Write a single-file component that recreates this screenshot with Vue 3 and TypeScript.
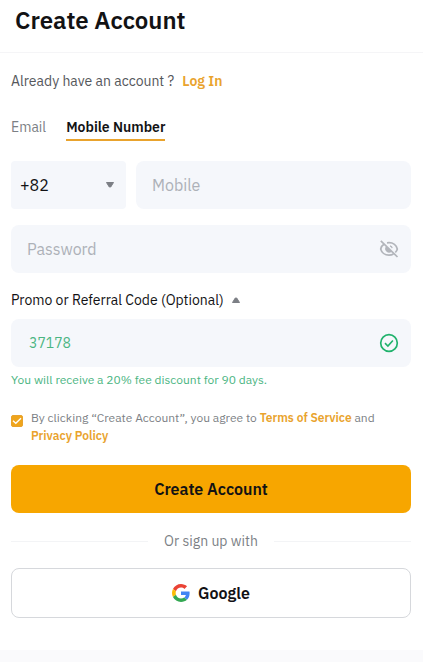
<script setup lang="ts">
import { ref } from 'vue'

type Method = 'email' | 'mobile'

const method = ref<Method>('mobile')
const dialCode = ref('+82')
const account = ref('')
const password = ref('')
const showPassword = ref(false)
const promoOpen = ref(true)
const promoCode = ref('37178')
const agreed = ref(true)
</script>

<template>
  <div class="page">
    <header class="header">
      <h1>Create Account</h1>
    </header>

    <main>
      <form class="form" @submit.prevent>
        <p class="login">
          <span>Already have an account ?</span>
          <a href="#login">Log In</a>
        </p>

        <div class="tabs" role="tablist">
          <button type="button" role="tab" class="tab" :class="{ active: method === 'email' }" :aria-selected="method === 'email'" @click="method = 'email'">Email</button>
          <button type="button" role="tab" class="tab" :class="{ active: method === 'mobile' }" :aria-selected="method === 'mobile'" @click="method = 'mobile'">Mobile Number</button>
        </div>

        <div class="account-row">
          <div class="field code">
            <select v-model="dialCode" aria-label="Country code">
              <option>+82</option>
              <option>+81</option>
              <option>+65</option>
            </select>
            <svg class="caret" viewBox="0 0 10 8" aria-hidden="true"><path d="M1.500 1.500h7l-2.800 4.500h-1.400z" /></svg>
          </div>
          <div class="field">
            <input v-model="account" type="tel" placeholder="Mobile" aria-label="Mobile" />
          </div>
        </div>

        <div class="field password">
          <input v-model="password" :type="showPassword ? 'text' : 'password'" placeholder="Password" aria-label="Password" />
          <button type="button" class="icon-button" aria-label="Show password" @click="showPassword = !showPassword">
            <svg viewBox="0 0 20 20" fill="none" stroke="#b2b5bb" stroke-width="1.7" aria-hidden="true">
              <path d="M5.200 5C3.300 6.200 2 8 1.700 10c.8 3.500 4.100 6.200 8.300 6.200 1.700 0 3.200-.4 4.500-1.200M8 3.900c.7-.1 1.300-.2 2-.2 4.200 0 7.500 2.800 8.300 6.300-.3 1.300-1 2.500-2 3.500" />
              <path d="M7.200 7.200a3.900 3.900 0 0 0 5.500 5.500z" fill="#b2b5bb" stroke="none" />
              <path d="M11 6.900c1.200.3 2 1.200 2.200 2.300" stroke-width="1.200" />
              <path d="M1.800 1.800l16.700 16.200" />
            </svg>
          </button>
        </div>

        <button type="button" class="promo-toggle" :aria-expanded="promoOpen" @click="promoOpen = !promoOpen">
          <span>Promo or Referral Code (Optional)</span>
          <svg class="caret up" viewBox="0 0 10 8" aria-hidden="true"><path d="M1.500 1.500h7l-2.800 4.500h-1.400z" /></svg>
        </button>

        <div v-if="promoOpen" class="promo">
          <div class="field">
            <input v-model="promoCode" type="text" aria-label="Promo or Referral Code" />
            <svg class="check" viewBox="0 0 20 20" fill="none" stroke="#20b26c" aria-hidden="true">
              <circle cx="10" cy="10" r="8.300" stroke-width="1.700" />
              <path d="M6 10.200l2.900 2.800 5-5.500" stroke-width="1.600" />
            </svg>
          </div>
          <p class="hint">You will receive a 20% fee discount for 90 days.</p>
        </div>

        <div class="terms">
          <input id="agree" v-model="agreed" type="checkbox" />
          <svg class="tick" viewBox="0 0 12 12" aria-hidden="true"><path d="M2 5.800l2.800 2.500 5.200-5" /></svg>
          <label for="agree">By clicking “Create Account”, you agree to <a href="#terms">Terms of Service</a> and <a href="#privacy">Privacy Policy</a></label>
        </div>

        <button type="submit" class="submit">Create Account</button>

        <div class="divider"><span>Or sign up with</span></div>

        <button type="button" class="google">
          <svg viewBox="0 0 48 48" aria-hidden="true">
            <path fill="#ea4335" d="M24 9.500c3.540 0 6.710 1.220 9.210 3.600l6.850-6.850C35.900 2.380 30.470 0 24 0 14.620 0 6.510 5.380 2.560 13.220l7.980 6.190C12.430 13.720 17.740 9.500 24 9.500z" />
            <path fill="#4285f4" d="M46.980 24.550c0-1.570-.15-3.090-.38-4.550H24v9.020h12.940c-.58 2.960-2.260 5.480-4.780 7.180l7.730 6c4.510-4.180 7.090-10.360 7.090-17.650z" />
            <path fill="#fbbc05" d="M10.530 28.590c-.48-1.450-.76-2.990-.76-4.590s.27-3.140.76-4.590l-7.980-6.190C.92 16.460 0 20.120 0 24c0 3.880.92 7.540 2.560 10.780l7.970-6.190z" />
            <path fill="#34a853" d="M24 48c6.480 0 11.930-2.130 15.890-5.810l-7.730-6c-2.150 1.450-4.920 2.300-8.160 2.300-6.260 0-11.570-4.220-13.470-9.910l-7.980 6.190C6.510 42.620 14.620 48 24 48z" />
          </svg>
          <span>Google</span>
        </button>
      </form>
    </main>

    <footer class="footer"></footer>
  </div>
</template>

<style>
body {
  margin: 0;
  background: #fff;
}
</style>

<style scoped>
.page {
  display: flex;
  flex-direction: column;
  min-height: 100vh;
  font-family: "IBM Plex Sans", Roboto, "Liberation Sans", sans-serif;
  font-size: 14px;
  line-height: 20px;
  color: #121214;
}

.page *,
.page {
  box-sizing: border-box;
}

.header {
  padding: 4px 15px 16px;
  border-bottom: 1px solid #f5f5f7;
}

h1 {
  margin: 0;
  font-size: 24px;
  line-height: 32px;
  font-weight: 600;
}

p {
  margin: 0;
}

button,
input,
select {
  margin: 0;
  padding: 0;
  border: 0;
  background: none;
  font: inherit;
  color: inherit;
}

button {
  cursor: pointer;
}

a {
  color: #e9a32d;
  font-weight: 600;
  text-decoration: none;
}

.form {
  display: flex;
  flex-direction: column;
  padding: 18px 12px 32px 11px;
}

.login {
  display: flex;
  gap: 8px;
  color: #56585c;
}

.tabs {
  display: flex;
  gap: 20px;
  margin-top: 26px;
}

.tab {
  padding-bottom: 2px;
  border-bottom: 2px solid transparent;
  color: #7c7f85;
}

.tab.active {
  border-color: #e9a32d;
  color: #121214;
  font-weight: 600;
}

.account-row {
  display: grid;
  grid-template-columns: 115px 1fr;
  gap: 10px;
  margin-top: 20px;
}

.field {
  display: flex;
  align-items: center;
  height: 48px;
  padding: 0 12px 0 16px;
  border-radius: 8px;
  background: #f5f7fb;
  font-size: 16px;
}

.field input {
  flex: 1;
  min-width: 0;
  height: 100%;
  outline: 0;
}

.field input::placeholder {
  color: #adb1b8;
  opacity: 1;
}

.field.code {
  padding: 0 11px 0 9px;
  border-radius: 4px;
}

.code select {
  flex: 1;
  min-width: 0;
  height: 100%;
  appearance: none;
  outline: 0;
}

.caret {
  width: 10px;
  height: 8px;
  fill: #7c7f85;
  stroke: #7c7f85;
  stroke-width: 1;
  stroke-linejoin: round;
}

.caret.up {
  transform: rotate(180deg);
}

.password {
  margin-top: 16px;
}

.icon-button {
  width: 20px;
  height: 20px;
}

.icon-button svg,
.check {
  display: block;
  width: 20px;
  height: 20px;
}

.promo-toggle {
  display: flex;
  align-items: center;
  align-self: flex-start;
  gap: 7px;
  margin-top: 17px;
}

.promo {
  margin-top: 9px;
}

.promo .field {
  padding-left: 18px;
}

.promo input {
  font-size: 14px;
  color: #4bb582;
}

.hint {
  margin-top: 4px;
  font-size: 12px;
  line-height: 18px;
  color: #4bb582;
}

.terms {
  display: grid;
  grid-template-columns: 12px 1fr;
  column-gap: 8px;
  margin-top: 20px;
  font-size: 12px;
  line-height: 18px;
  color: #7c7f85;
}

.terms input,
.tick {
  grid-area: 1 / 1;
  width: 12px;
  height: 12px;
  margin-top: 6px;
}

.terms input {
  appearance: none;
  border: 1px solid #e9a32d;
  border-radius: 2px;
}

.terms input:checked {
  background: #efa51c;
}

.tick {
  fill: none;
  stroke: #fff;
  stroke-width: 1.3;
  pointer-events: none;
}

.submit {
  height: 48px;
  margin-top: 20px;
  border-radius: 8px;
  background: #f7a600;
  font-size: 16px;
  font-weight: 600;
}

.divider {
  display: flex;
  align-items: center;
  gap: 16px;
  margin-top: 18px;
  color: #7c7f85;
}

.divider::before,
.divider::after {
  content: "";
  flex: 1;
  height: 1px;
  background: #f3f4f6;
}

.google {
  display: flex;
  align-items: center;
  justify-content: center;
  gap: 8px;
  height: 50px;
  margin-top: 17px;
  border: 1px solid #d6d8dc;
  border-radius: 8px;
  font-size: 16px;
  font-weight: 600;
}

.google svg {
  width: 18px;
  height: 18px;
}

.footer {
  flex: 1;
  background: #fafafc;
}
</style>
